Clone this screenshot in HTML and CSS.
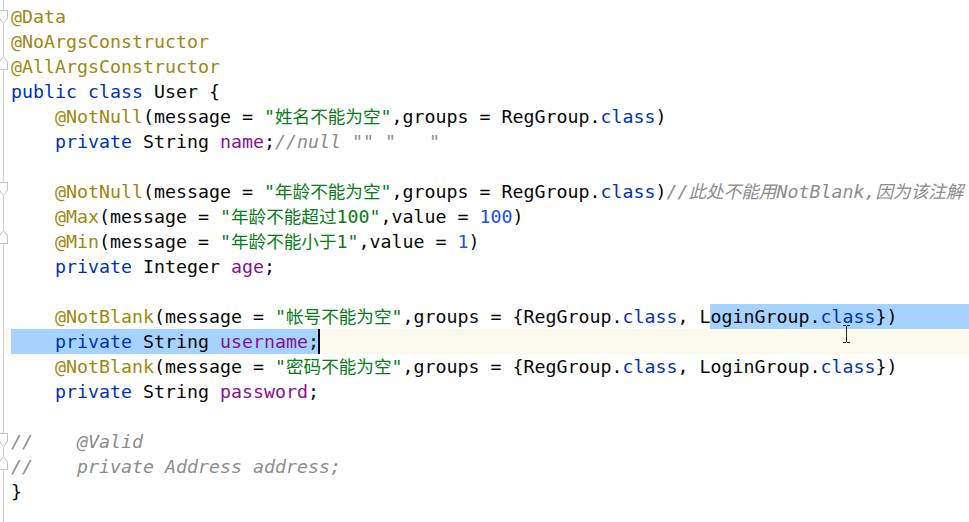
FILE: index.html
```html
<!DOCTYPE html>
<html lang="zh">
<head>
<meta charset="utf-8">
<title>User.java</title>
<link rel="stylesheet" href="styles.css">
</head>
<body>
<div class="editor">
  <div class="gutter">
    <span class="fold start f0"></span>
    <span class="fold end f2"></span>
    <span class="fold start f7"></span>
    <span class="fold end f9"></span>
    <span class="fold start f17"></span>
    <span class="fold end f18"></span>
  </div>
  <div class="code">
    <div class="line"><span class="an">@Data</span></div>
    <div class="line"><span class="an">@NoArgsConstructor</span></div>
    <div class="line"><span class="an">@AllArgsConstructor</span></div>
    <div class="line"><span class="kw">public class</span> User {</div>
    <div class="line">    <span class="an">@NotNull</span>(message = <span class="str">"<span class="cjk">姓名不能为空</span>"</span>,groups = RegGroup.<span class="kw">class</span>)</div>
    <div class="line">    <span class="kw">private</span> String <span class="fd">name</span>;<span class="cm">//null "" "   "</span></div>
    <div class="line"></div>
    <div class="line">    <span class="an">@NotNull</span>(message = <span class="str">"<span class="cjk">年龄不能为空</span>"</span>,groups = RegGroup.<span class="kw">class</span>)<span class="cm">//<span class="cjk">此处不能用</span>NotBlank,<span class="cjk">因为该注解</span></span></div>
    <div class="line">    <span class="an">@Max</span>(message = <span class="str">"<span class="cjk">年龄不能超过</span>100"</span>,value = <span class="num">100</span>)</div>
    <div class="line">    <span class="an">@Min</span>(message = <span class="str">"<span class="cjk">年龄不能小于</span>1"</span>,value = <span class="num">1</span>)</div>
    <div class="line">    <span class="kw">private</span> Integer <span class="fd">age</span>;</div>
    <div class="line"></div>
    <div class="line row"><span>    <span class="an">@NotBlank</span>(message = <span class="str">"<span class="cjk">帐号不能为空</span>"</span>,groups = {RegGroup.<span class="kw">class</span>, L</span><span class="sel">oginGroup.<span class="kw">class</span>})</span><span class="sel fill"></span></div>
    <div class="line row current"><span class="sel">    <span class="kw">private</span> String <span class="fd">username</span>;</span><span class="caret"></span><span class="fill"></span></div>
    <div class="line">    <span class="an">@NotBlank</span>(message = <span class="str">"<span class="cjk">密码不能为空</span>"</span>,groups = {RegGroup.<span class="kw">class</span>, LoginGroup.<span class="kw">class</span>})</div>
    <div class="line">    <span class="kw">private</span> String <span class="fd">password</span>;</div>
    <div class="line"></div>
    <div class="line"><span class="cm">//    @Valid</span></div>
    <div class="line"><span class="cm">//    private Address address;</span></div>
    <div class="line">}</div>
  </div>
  <svg class="ibeam" width="9" height="18" viewBox="0 0 9 18" aria-hidden="true">
    <path d="M1 0.5h3M5 0.5h3M4.5 1v16M1 17.5h3M5 17.5h3" stroke="#222" stroke-width="1" fill="none"/>
  </svg>
</div>
</body>
</html>
```
FILE: styles.css
```css
html, body {
  margin: 0;
  padding: 0;
  background: #ffffff;
}
body {
  width: 969px;
  height: 522px;
  overflow: hidden;
}
.editor {
  position: relative;
  display: flex;
  height: 522px;
  background: #ffffff;
  font-family: "DejaVu Sans Mono", "Liberation Mono", "Noto Sans CJK SC", monospace;
  font-size: 18.27px;
  color: #080808;
}
.gutter {
  position: relative;
  width: 3px;
  border-right: 1px solid #d2d2d2;
  flex: none;
}
.fold {
  position: absolute;
  left: -1px;
  width: 9px;
  height: 14px;
  background: #ffffff;
  z-index: 2;
}
.fold::before {
  content: "";
  position: absolute;
  inset: 0;
  background: #c4c4c4;
}
.fold::after {
  content: "";
  position: absolute;
  inset: 1px;
  background: #ffffff;
}
.fold.start::before { clip-path: polygon(0 0, 100% 0, 100% 60%, 50% 100%, 0 60%); }
.fold.start::after { clip-path: polygon(0 0, 100% 0, 100% 58%, 50% 100%, 0 58%); }
.fold.end::before { clip-path: polygon(50% 0, 100% 40%, 100% 100%, 0 100%, 0 40%); }
.fold.end::after { clip-path: polygon(50% 0, 100% 42%, 100% 100%, 0 100%, 0 42%); }
.f0 { top: 10px; }
.f2 { top: 56px; }
.f7 { top: 182px; }
.f9 { top: 230px; }
.f17 { top: 433px; }
.f18 { top: 456px; }

.code {
  flex: 1;
  min-width: 0;
  padding-top: 4px;
  overflow: hidden;
}
.line {
  height: 25px;
  line-height: 25px;
  padding-left: 7px;
  white-space: pre;
  overflow: hidden;
}
.line.row {
  display: flex;
}
.line.current {
  background: #fcfaed;
}
.sel {
  background: #a6d2ff;
}
.fill {
  flex: 1;
}
.caret {
  width: 2px;
  height: 25px;
  background: #000000;
  margin-left: -1px;
}
.an { color: #9e880d; }
.kw { color: #0033b3; }
.fd { color: #871094; }
.str { color: #067d17; }
.num { color: #1750eb; }
.cm { color: #8c8c8c; font-style: italic; }
.cjk {
  font-family: "Noto Sans CJK SC", sans-serif;
  font-size: 17.6px;
  line-height: 1;
}
.ibeam {
  position: absolute;
  left: 842px;
  top: 325px;
}
```
